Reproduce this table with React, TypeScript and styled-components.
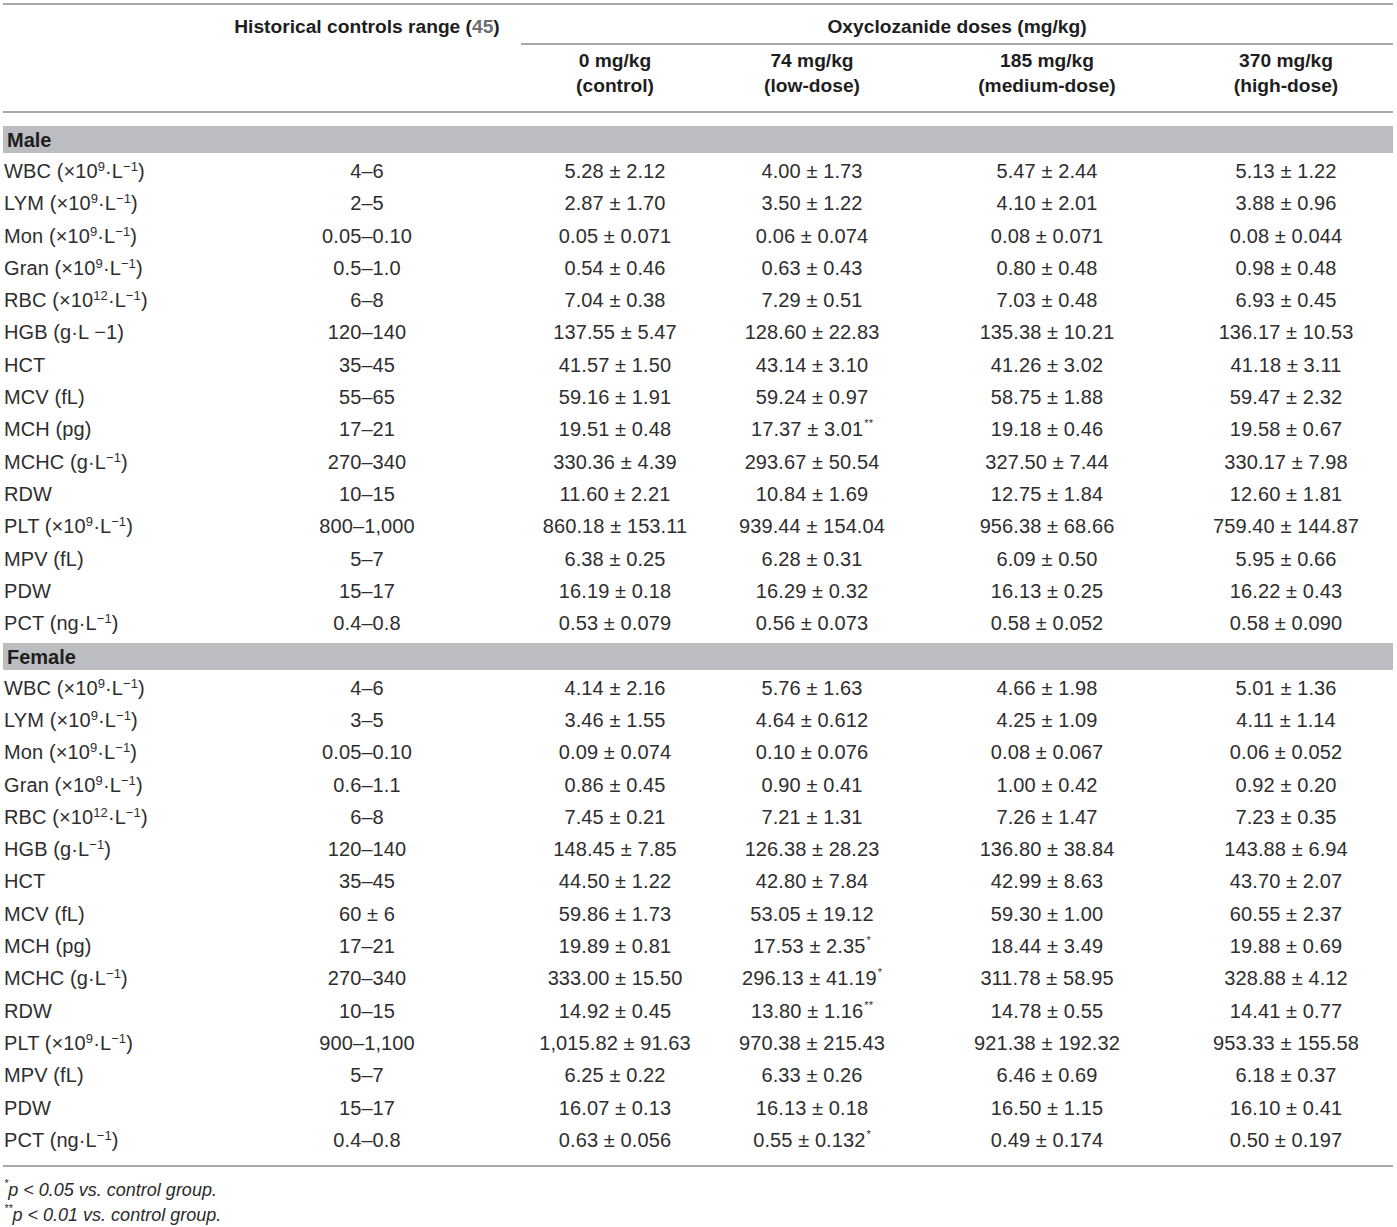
import React from "react";
import styled, { createGlobalStyle } from "styled-components";

const Global = createGlobalStyle`
  html, body { margin: 0; padding: 0; background: #fff; }
  body { font-family: "Liberation Sans", Arial, sans-serif; color: #262626; }
`;

const COLS = "210px 308px 188px 206px 264px 214px";

const Page = styled.div`
  width: 1390px;
  padding: 3px 4px 0 3px;
`;

const Rule = styled.div<{ $top?: number }>`
  height: 0;
  border-top: 2px solid #a9a9a9;
  margin-top: ${(p) => p.$top ?? 0}px;
`;

const HeadRow = styled.div`
  display: grid;
  grid-template-columns: ${COLS};
  font-weight: 700;
  font-size: 19.2px;
  color: #1e1e1e;
`;

const HeadCell = styled.div<{ $span?: number; $start?: number; $ruled?: boolean }>`
  grid-column: ${(p) => (p.$start ? `${p.$start} / span ${p.$span ?? 1}` : `span ${p.$span ?? 1}`)};
  text-align: center;
  line-height: 24px;
  padding: 10px 0 4px;
  border-bottom: ${(p) => (p.$ruled ? "2px solid #a9a9a9" : "2px solid transparent")};
`;

const SubHeadCell = styled.div<{ $start?: number }>`
  ${(p) => (p.$start ? `grid-column: ${p.$start};` : "")}
  text-align: center;
  line-height: 25px;
  padding: 3px 0 13px;
`;

const Ref = styled.span`
  color: #6d6e71;
`;

const Section = styled.div<{ $first?: boolean }>`
  padding-top: ${(p) => (p.$first ? 10 : 0)}px;
`;

const Band = styled.div`
  height: 27px;
  margin: 3px 0 2.3px;
  background: #bcbdc0;
  font-weight: 700;
  font-size: 20px;
  line-height: 28px;
  padding-left: 4px;
  color: #1e1e1e;
`;

const Row = styled.div`
  display: grid;
  grid-template-columns: ${COLS};
  height: 32.3px;
  align-items: center;
  font-size: 20px;
  letter-spacing: 0.1px;
  color: #2e2e2e;
`;

const Label = styled.div`
  padding-left: 1px;
  white-space: nowrap;
`;

const Cell = styled.div`
  text-align: center;
  white-space: nowrap;
`;

const Sup = styled.sup`
  font-size: 13px;
  line-height: 0;
  vertical-align: 0;
  position: relative;
  top: -7px;
`;

const Star = styled.sup`
  font-size: 11px;
  line-height: 0;
  vertical-align: 0;
  position: relative;
  top: -9px;
  margin-left: 1px;
`;

const Notes = styled.div`
  padding-top: 11px;
  font-size: 18px;
  font-style: italic;
  line-height: 25px;
  color: #2b2b2b;
`;

type Unit = "e9" | "e12" | "gL" | "ngL" | "fL" | "pg" | "gLraw" | "";

const units: Record<Unit, React.ReactNode> = {
  e9: (
    <>
      {" "}(×10<Sup>9</Sup>·L<Sup>−1</Sup>)
    </>
  ),
  e12: (
    <>
      {" "}(×10<Sup>12</Sup>·L<Sup>−1</Sup>)
    </>
  ),
  gL: (
    <>
      {" "}(g·L<Sup>−1</Sup>)
    </>
  ),
  ngL: (
    <>
      {" "}(ng·L<Sup>−1</Sup>)
    </>
  ),
  fL: <> (fL)</>,
  pg: <> (pg)</>,
  gLraw: <> (g·L −1)</>,
  "": null,
};

type R = [string, Unit, string, string, string, string, string];

const male: R[] = [
  ["WBC", "e9", "4–6", "5.28 ± 2.12", "4.00 ± 1.73", "5.47 ± 2.44", "5.13 ± 1.22"],
  ["LYM", "e9", "2–5", "2.87 ± 1.70", "3.50 ± 1.22", "4.10 ± 2.01", "3.88 ± 0.96"],
  ["Mon", "e9", "0.05–0.10", "0.05 ± 0.071", "0.06 ± 0.074", "0.08 ± 0.071", "0.08 ± 0.044"],
  ["Gran", "e9", "0.5–1.0", "0.54 ± 0.46", "0.63 ± 0.43", "0.80 ± 0.48", "0.98 ± 0.48"],
  ["RBC", "e12", "6–8", "7.04 ± 0.38", "7.29 ± 0.51", "7.03 ± 0.48", "6.93 ± 0.45"],
  ["HGB", "gLraw", "120–140", "137.55 ± 5.47", "128.60 ± 22.83", "135.38 ± 10.21", "136.17 ± 10.53"],
  ["HCT", "", "35–45", "41.57 ± 1.50", "43.14 ± 3.10", "41.26 ± 3.02", "41.18 ± 3.11"],
  ["MCV", "fL", "55–65", "59.16 ± 1.91", "59.24 ± 0.97", "58.75 ± 1.88", "59.47 ± 2.32"],
  ["MCH", "pg", "17–21", "19.51 ± 0.48", "17.37 ± 3.01**", "19.18 ± 0.46", "19.58 ± 0.67"],
  ["MCHC", "gL", "270–340", "330.36 ± 4.39", "293.67 ± 50.54", "327.50 ± 7.44", "330.17 ± 7.98"],
  ["RDW", "", "10–15", "11.60 ± 2.21", "10.84 ± 1.69", "12.75 ± 1.84", "12.60 ± 1.81"],
  ["PLT", "e9", "800–1,000", "860.18 ± 153.11", "939.44 ± 154.04", "956.38 ± 68.66", "759.40 ± 144.87"],
  ["MPV", "fL", "5–7", "6.38 ± 0.25", "6.28 ± 0.31", "6.09 ± 0.50", "5.95 ± 0.66"],
  ["PDW", "", "15–17", "16.19 ± 0.18", "16.29 ± 0.32", "16.13 ± 0.25", "16.22 ± 0.43"],
  ["PCT", "ngL", "0.4–0.8", "0.53 ± 0.079", "0.56 ± 0.073", "0.58 ± 0.052", "0.58 ± 0.090"],
];

const female: R[] = [
  ["WBC", "e9", "4–6", "4.14 ± 2.16", "5.76 ± 1.63", "4.66 ± 1.98", "5.01 ± 1.36"],
  ["LYM", "e9", "3–5", "3.46 ± 1.55", "4.64 ± 0.612", "4.25 ± 1.09", "4.11 ± 1.14"],
  ["Mon", "e9", "0.05–0.10", "0.09 ± 0.074", "0.10 ± 0.076", "0.08 ± 0.067", "0.06 ± 0.052"],
  ["Gran", "e9", "0.6–1.1", "0.86 ± 0.45", "0.90 ± 0.41", "1.00 ± 0.42", "0.92 ± 0.20"],
  ["RBC", "e12", "6–8", "7.45 ± 0.21", "7.21 ± 1.31", "7.26 ± 1.47", "7.23 ± 0.35"],
  ["HGB", "gL", "120–140", "148.45 ± 7.85", "126.38 ± 28.23", "136.80 ± 38.84", "143.88 ± 6.94"],
  ["HCT", "", "35–45", "44.50 ± 1.22", "42.80 ± 7.84", "42.99 ± 8.63", "43.70 ± 2.07"],
  ["MCV", "fL", "60 ± 6", "59.86 ± 1.73", "53.05 ± 19.12", "59.30 ± 1.00", "60.55 ± 2.37"],
  ["MCH", "pg", "17–21", "19.89 ± 0.81", "17.53 ± 2.35*", "18.44 ± 3.49", "19.88 ± 0.69"],
  ["MCHC", "gL", "270–340", "333.00 ± 15.50", "296.13 ± 41.19*", "311.78 ± 58.95", "328.88 ± 4.12"],
  ["RDW", "", "10–15", "14.92 ± 0.45", "13.80 ± 1.16**", "14.78 ± 0.55", "14.41 ± 0.77"],
  ["PLT", "e9", "900–1,100", "1,015.82 ± 91.63", "970.38 ± 215.43", "921.38 ± 192.32", "953.33 ± 155.58"],
  ["MPV", "fL", "5–7", "6.25 ± 0.22", "6.33 ± 0.26", "6.46 ± 0.69", "6.18 ± 0.37"],
  ["PDW", "", "15–17", "16.07 ± 0.13", "16.13 ± 0.18", "16.50 ± 1.15", "16.10 ± 0.41"],
  ["PCT", "ngL", "0.4–0.8", "0.63 ± 0.056", "0.55 ± 0.132*", "0.49 ± 0.174", "0.50 ± 0.197"],
];

function Value({ v }: { v: string }) {
  const m = v.match(/^(.*?)(\*+)$/);
  if (!m) return <Cell>{v}</Cell>;
  return (
    <Cell>
      {m[1]}
      <Star>{m[2]}</Star>
    </Cell>
  );
}

function Block({ title, rows, first }: { title: string; rows: R[]; first?: boolean }) {
  return (
    <Section $first={first}>
      <Band>{title}</Band>
      {rows.map((r, i) => (
        <Row key={i}>
          <Label>
            {r[0]}
            {units[r[1]]}
          </Label>
          <Cell>{r[2]}</Cell>
          <Value v={r[3]} />
          <Value v={r[4]} />
          <Value v={r[5]} />
          <Value v={r[6]} />
        </Row>
      ))}
    </Section>
  );
}

export default function App() {
  return (
    <>
      <Global />
      <Page>
        <Rule />
        <HeadRow>
          <HeadCell $start={2}>
            Historical controls range (<Ref>45</Ref>)
          </HeadCell>
          <HeadCell $start={3} $span={4} $ruled>
            Oxyclozanide doses (mg/kg)
          </HeadCell>
        </HeadRow>
        <HeadRow>
          <SubHeadCell $start={3}>
            0 mg/kg
            <br />
            (control)
          </SubHeadCell>
          <SubHeadCell>
            74 mg/kg
            <br />
            (low-dose)
          </SubHeadCell>
          <SubHeadCell>
            185 mg/kg
            <br />
            (medium-dose)
          </SubHeadCell>
          <SubHeadCell>
            370 mg/kg
            <br />
            (high-dose)
          </SubHeadCell>
        </HeadRow>
        <Rule />
        <Block title="Male" rows={male} first />
        <Block title="Female" rows={female} />
        <Rule $top={8} />
        <Notes>
          <Star>*</Star>p &lt; 0.05 vs. control group.
          <br />
          <Star>**</Star>p &lt; 0.01 vs. control group.
        </Notes>
      </Page>
    </>
  );
}
